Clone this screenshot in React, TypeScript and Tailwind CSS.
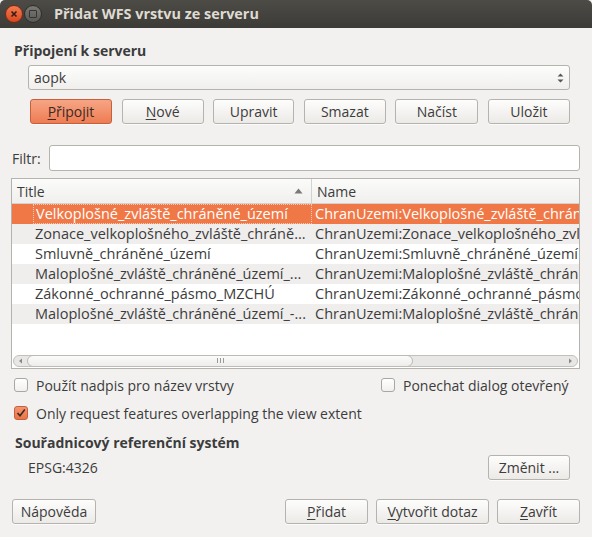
import React from "react";

const font = { fontFamily: '"Open Sans", "Noto Sans", "DejaVu Sans", sans-serif' };

function Btn({ children, w, primary }: { children: React.ReactNode; w: string; primary?: boolean }) {
  return (
    <div
      className={`${w} h-[25px] rounded-[3px] border flex items-center justify-center text-[14px] ${
        primary
          ? "border-[#c4603c] bg-gradient-to-b from-[#f6a585] to-[#ee7c52] text-[#3a2a24]"
          : "border-[#b5b3ae] bg-gradient-to-b from-[#fdfdfc] to-[#eceae7] text-[#3c3c3c]"
      } shadow-[0_1px_0_rgba(255,255,255,0.7)]`}
    >
      {children}
    </div>
  );
}

const U = ({ c }: { c: string }) => <span className="underline underline-offset-2">{c}</span>;

const rows = [
  ["Velkoplošné_zvláště_chráněné_území", "ChranUzemi:Velkoplošné_zvláště_chráněné_území"],
  ["Zonace_velkoplošného_zvláště_chráně...", "ChranUzemi:Zonace_velkoplošného_zvláště_chráněného"],
  ["Smluvně_chráněné_území", "ChranUzemi:Smluvně_chráněné_území"],
  ["Maloplošné_zvláště_chráněné_území_...", "ChranUzemi:Maloplošné_zvláště_chráněné_území"],
  ["Zákonné_ochranné_pásmo_MZCHÚ", "ChranUzemi:Zákonné_ochranné_pásmo_MZCHÚ"],
  ["Maloplošné_zvláště_chráněné_území_-...", "ChranUzemi:Maloplošné_zvláště_chráněné_území"],
];

function Checkbox({ checked }: { checked?: boolean }) {
  return checked ? (
    <div className="w-[14px] h-[14px] shrink-0 rounded-[3px] border border-[#c4603c] bg-gradient-to-b from-[#f49470] to-[#ec7246] flex items-center justify-center">
      <svg width="10" height="10" viewBox="0 0 10 10">
        <path d="M1.5 5 L4 7.8 L8.8 1.5" stroke="#3b2a22" strokeWidth="1.6" fill="none" />
      </svg>
    </div>
  ) : (
    <div className="w-[14px] h-[14px] shrink-0 rounded-[3px] border border-[#a9a7a3] bg-gradient-to-b from-white to-[#f1f0ee]" />
  );
}

export default function App() {
  return (
    <div className="w-[592px] h-[537px] bg-[#f2f1f0] overflow-hidden text-[#3c3c3c]" style={font}>
      {/* title bar */}
      <div className="h-[28px] bg-gradient-to-b from-[#4c4b46] to-[#3c3b37] flex items-center pl-[5px] rounded-t-[5px]">
        <div className="w-[18px] h-[18px] rounded-full bg-gradient-to-b from-[#f37b4f] to-[#d9461d] border border-[#7a2b14] flex items-center justify-center">
          <svg width="8" height="8" viewBox="0 0 8 8">
            <path d="M1.5 1.5 L6.5 6.5 M6.5 1.5 L1.5 6.5" stroke="#3a1a10" strokeWidth="1.6" />
          </svg>
        </div>
        <div className="ml-[1px] w-[18px] h-[18px] rounded-full bg-gradient-to-b from-[#7a7975] to-[#5a5955] border border-[#2e2d2a] flex items-center justify-center">
          <div className="w-[8px] h-[8px] border-[1.5px] border-[#35342f] rounded-[1px]" />
        </div>
        <div className="ml-[12px] text-[14.4px] font-bold text-[#dfdbd2]">Přidat WFS vrstvu ze serveru</div>
      </div>

      <div className="px-[12px]">
        <div className="mt-[14px] h-[18px] text-[14px] font-bold leading-[18px] pl-[2px]">Připojení k serveru</div>
        <div className="mt-[5px] ml-[16px] mr-[10px] h-[25px] rounded-[3px] border border-[#b5b3ae] bg-gradient-to-b from-[#fdfdfc] to-[#f0efed] flex items-center justify-between px-[5px] text-[14px]">
          <span>aopk</span>
          <svg width="7" height="12" viewBox="0 0 7 12">
            <path d="M0.5 4.5 L3.5 1.5 L6.5 4.5 Z M0.5 7.5 L3.5 10.5 L6.5 7.5 Z" fill="#555" />
          </svg>
        </div>
        <div className="mt-[9px] ml-[18px] mr-[10px] flex justify-between">
          <Btn w="w-[82px]" primary>
            <U c="P" />řipojit
          </Btn>
          <Btn w="w-[82px]">
            <U c="N" />ové
          </Btn>
          <Btn w="w-[81px]">Upravit</Btn>
          <Btn w="w-[82px]">Smazat</Btn>
          <Btn w="w-[83px]">Načíst</Btn>
          <Btn w="w-[82px]">Uložit</Btn>
        </div>

        <div className="mt-[21px] flex items-center">
          <span className="text-[14px] w-[37px]">Filtr:</span>
          <div className="flex-1 h-[26px] rounded-[3px] border border-[#b5b3ae] bg-white" />
        </div>

        <div className="mt-[7px] -ml-[1px] h-[191px] border border-[#b5b3ae] bg-white flex flex-col">
          <div className="h-[25px] flex border-b border-[#d4d2ce] bg-gradient-to-b from-[#fbfbfa] to-[#f0efed] text-[14px]">
            <div className="w-[300px] border-r border-[#d4d2ce] flex items-center justify-between pl-[5px] pr-[8px]">
              <span>Title</span>
              <svg width="9" height="6" viewBox="0 0 9 6">
                <path d="M0.5 5.5 L4.5 0.5 L8.5 5.5 Z" fill="#7a7875" />
              </svg>
            </div>
            <div className="flex-1 flex items-center pl-[5px]">Name</div>
          </div>
          <div className="flex-1 overflow-hidden">
            {rows.map((r, i) => {
              const sel = i === 0;
              const bg = sel ? "bg-[#f07746] text-white" : i % 2 === 1 ? "bg-[#efeeed]" : "bg-white";
              return (
                <div key={i} className={`h-[20px] flex text-[14.5px] leading-[20px] whitespace-nowrap ${bg}`}>
                  <div className="w-[300px] overflow-hidden pl-[21px]">
                    <div
                      className={`h-[20px] pl-[2px] overflow-hidden ${
                        sel ? "border border-dotted border-[#f9c9b4] leading-[18px]" : ""
                      }`}
                    >
                      {r[0]}
                    </div>
                  </div>
                  <div className="flex-1 overflow-hidden pl-[3px]">{r[1]}</div>
                </div>
              );
            })}
          </div>
          <div className="h-[14px] flex items-center px-[1px] pb-[1px]">
            <div className="flex-1 h-[12px] rounded-full border border-[#c2c0bc] bg-[#e8e7e5] flex items-center relative">
              <svg width="8" height="8" viewBox="0 0 8 8" className="ml-[3px]">
                <path d="M5 1.5 L2 4 L5 6.5 Z" fill="#888" />
              </svg>
              <div className="ml-[2px] w-[386px] h-[12px] rounded-full border border-[#bdbbb7] bg-gradient-to-b from-[#fbfbfa] to-[#eeedeb] flex items-center justify-center">
                <div className="flex gap-[2px]">
                  <div className="w-[1px] h-[5px] bg-[#999]" />
                  <div className="w-[1px] h-[5px] bg-[#999]" />
                  <div className="w-[1px] h-[5px] bg-[#999]" />
                </div>
              </div>
              <div className="flex-1" />
              <svg width="8" height="8" viewBox="0 0 8 8" className="mr-[3px]">
                <path d="M3 1.5 L6 4 L3 6.5 Z" fill="#888" />
              </svg>
            </div>
          </div>
        </div>

        <div className="mt-[8px] h-[16px] flex items-center text-[14px]">
          <div className="flex items-center gap-[8px] w-[369px] pl-[2px]">
            <Checkbox />
            <span>Použít nadpis pro název vrstvy</span>
          </div>
          <div className="flex items-center gap-[8px]">
            <Checkbox />
            <span>Ponechat dialog otevřený</span>
          </div>
        </div>
        <div className="mt-[12px] h-[16px] flex items-center gap-[8px] text-[14px] pl-[2px]">
          <Checkbox checked />
          <span>Only request features overlapping the view extent</span>
        </div>

        <div className="mt-[13px] h-[18px] text-[14px] font-bold leading-[18px] pl-[3px]">Souřadnicový referenční systém</div>
        <div className="mt-[3px] flex items-center justify-between mr-[10px]">
          <span className="text-[14px] pl-[16px]">EPSG:4326</span>
          <Btn w="w-[82px]">Změnit ...</Btn>
        </div>

        <div className="mt-[19px] flex items-center">
          <Btn w="w-[84px]">Nápověda</Btn>
          <div className="flex-1" />
          <Btn w="w-[83px]">
            <U c="P" />řidat
          </Btn>
          <div className="w-[8px]" />
          <Btn w="w-[113px]">
            <U c="V" />ytvořit dotaz
          </Btn>
          <div className="w-[8px]" />
          <Btn w="w-[83px]">
            <U c="Z" />avřít
          </Btn>
        </div>
      </div>
    </div>
  );
}
